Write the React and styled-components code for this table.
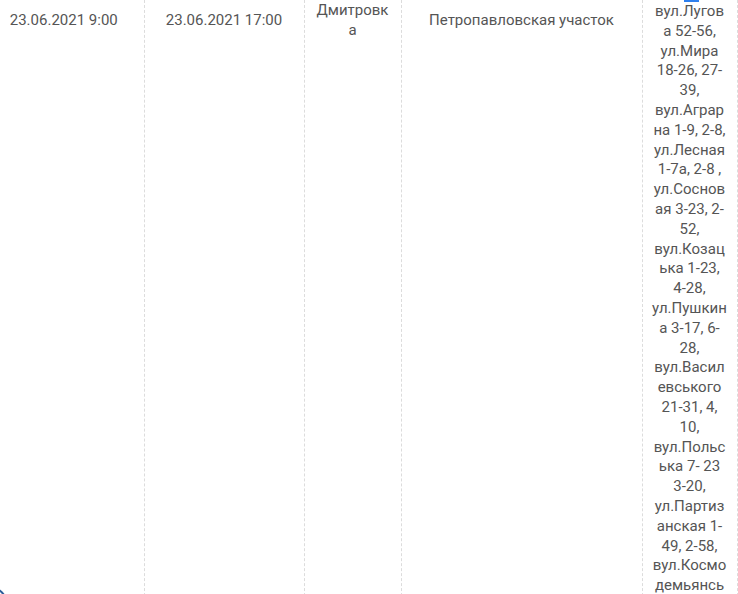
import styled, { createGlobalStyle } from 'styled-components';

const GlobalStyle = createGlobalStyle`
  html, body {
    margin: 0;
    padding: 0;
    background: #fff;
    overflow: hidden;
  }
  body {
    font-family: Roboto, "Liberation Sans", Arial, sans-serif;
    color: #555;
  }
`;

const Page = styled.div`
  position: relative;
  width: 738px;
  height: 594px;
  overflow: hidden;
`;

const Table = styled.table`
  border-collapse: collapse;
  table-layout: fixed;
  margin-left: -16px;
  width: 753px;
`;

const Cell = styled.td`
  position: relative;
  width: ${(p) => p.$width}px;
  padding: 0 ${(p) => p.$pad}px;
  border-right: 1px dashed #dcdcdc;
  vertical-align: top;
  text-align: center;
  font-size: 15px;
  line-height: 19.8px;
  overflow-wrap: anywhere;
  box-sizing: border-box;
`;

const Middle = styled.div`
  height: 41px;
  display: flex;
  align-items: center;
  justify-content: center;
`;

const Streets = styled.div`
  padding-top: 2px;
`;

const Mark = styled.span`
  position: absolute;
  top: 0;
  left: 41px;
  width: 15px;
  height: 2px;
  background: #2f80ed;
`;

const Corner = styled.div`
  position: absolute;
  left: -30px;
  bottom: -30px;
  width: 34px;
  height: 34px;
  border-radius: 50%;
  border: 2px solid #2d5d9a;
`;

const streets =
  'вул.Лугова 52-56, ул.Мира 18-26, 27-39, вул.Аграрна 1-9, 2-8, ул.Лесная 1-7а, 2-8 , ул.Сосновая 3-23, 2-52, вул.Козацька 1-23, 4-28, ул.Пушкина 3-17, 6-28, вул.Василевського 21-31, 4, 10, вул.Польська 7- 23 3-20, ул.Партизанская 1-49, 2-58, вул.Космодемьянськой';

const App = () => {
  return (
    <Page>
      <GlobalStyle />
      <Table>
        <tbody>
          <tr>
            <Cell $width={160} $pad={10}><Middle>23.06.2021 9:00</Middle></Cell>
            <Cell $width={160} $pad={10}><Middle>23.06.2021 17:00</Middle></Cell>
            <Cell $width={97} $pad={10}><Middle>Дмитровка</Middle></Cell>
            <Cell $width={241} $pad={10}><Middle>Петропавловская участок</Middle></Cell>
            <Cell $width={95} $pad={9}>
              <Mark />
              <Streets>{streets}</Streets>
            </Cell>
          </tr>
        </tbody>
      </Table>
      <Corner />
    </Page>
  );
};

export default App;
